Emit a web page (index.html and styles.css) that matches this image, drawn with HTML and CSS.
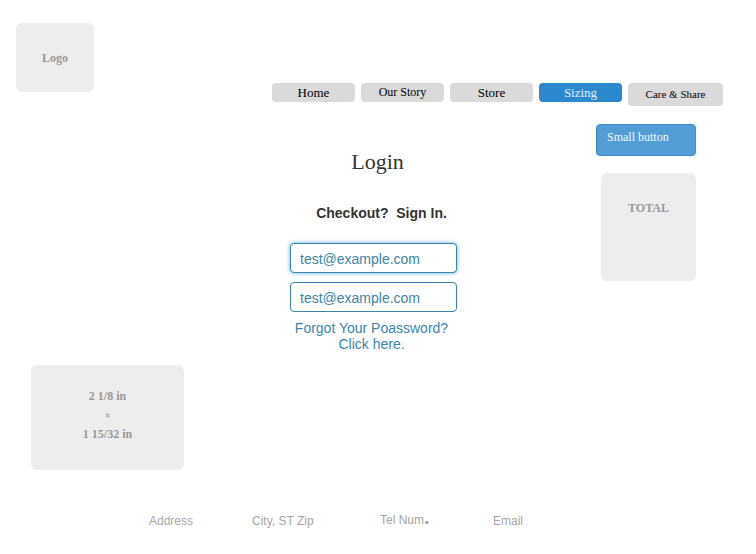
FILE: index.html
```html
<!DOCTYPE html>
<html lang="en">
<head>
<meta charset="utf-8">
<meta name="viewport" content="width=device-width, initial-scale=1">
<title>Login</title>
<link rel="stylesheet" href="styles.css">
</head>
<body>
<header class="header">
  <div class="box logo">Logo</div>
  <nav class="nav">
    <a class="tab" href="#">Home</a>
    <a class="tab tab-medium" href="#">Our Story</a>
    <a class="tab" href="#">Store</a>
    <a class="tab tab-active" href="#">Sizing</a>
    <a class="tab tab-wide" href="#">Care &amp; Share</a>
  </nav>
</header>
<main class="main">
  <div class="box size-box">
    <span>2 1/8 in</span>
    <span class="times">×</span>
    <span>1 15/32 in</span>
  </div>
  <form class="login">
    <h1 class="title">Login</h1>
    <h2 class="subtitle">Checkout?&nbsp; Sign In.</h2>
    <input class="field field-focus" type="email" value="test@example.com" aria-label="Email">
    <input class="field" type="email" value="test@example.com" aria-label="Confirm email">
    <a class="forgot" href="#">Forgot Your Poassword?<br>Click here.</a>
  </form>
  <aside class="side">
    <button class="small-button" type="button">Small button</button>
    <div class="box total">TOTAL</div>
  </aside>
</main>
<footer class="footer">
  <span>Address</span>
  <span>City, ST Zip</span>
  <span>Tel Num<b class="dot">.</b></span>
  <span>Email</span>
</footer>
</body>
</html>
```
FILE: styles.css
```css
* {
  box-sizing: border-box;
}

body {
  margin: 0;
  background: #fff;
  color: #333;
  font-family: "Liberation Sans", Arial, sans-serif;
}

.header {
  display: flex;
  justify-content: space-between;
  align-items: flex-start;
  padding: 23px 33px 0 16px;
}

.box {
  border-radius: 6px;
  background: #ededed;
  color: #999;
  font: bold 12px/19px "Liberation Serif", "Times New Roman", serif;
  text-align: center;
}

.logo {
  width: 78px;
  padding: 26px 0 24px;
}

.nav {
  display: flex;
  align-items: flex-start;
  gap: 6px;
  padding-top: 60px;
}

.tab {
  width: 83px;
  border-radius: 4px;
  background: #dadada;
  color: #000;
  font: 13px/19px "Liberation Serif", "Times New Roman", serif;
  text-align: center;
  text-decoration: none;
}

.tab-medium {
  font-size: 12px;
}

.tab-active {
  background: #2b88cd;
  color: #e4f1fb;
}

.tab-wide {
  width: 95px;
  font-size: 11px;
  line-height: 23px;
}

.main {
  display: grid;
  grid-template-columns: 153px 1fr 100px;
  padding: 18px 60px 0 31px;
}

.size-box {
  display: flex;
  flex-direction: column;
  align-self: end;
  padding: 22px 0 26px;
}

.times {
  font-size: 10px;
}

.login {
  display: flex;
  flex-direction: column;
  align-items: center;
  padding: 24px 33px 118px 0;
}

.title {
  margin: 0 0 27px;
  padding-left: 8px;
  font: 22px/28px "Liberation Serif", "Times New Roman", serif;
}

.subtitle {
  margin: 0 0 20px;
  padding-left: 16px;
  font-size: 14px;
  line-height: 20px;
}

.field {
  width: 167px;
  height: 30px;
  margin: 0 0 9px;
  padding: 1px 9px 0;
  border: 1px solid #3b85a8;
  border-radius: 4px;
  outline: 0;
  background: #fff;
  color: #3b85a8;
  font: 14px/20px "Liberation Sans", Arial, sans-serif;
}

.field-focus {
  box-shadow: 0 0 4px #5cace0;
}

.forgot {
  margin-top: -1px;
  padding-right: 4px;
  color: #3b85a8;
  font-size: 14px;
  line-height: 16px;
  text-align: center;
  text-decoration: none;
}

.side {
  display: flex;
  flex-direction: column;
  align-items: flex-end;
  gap: 17px;
}

.small-button {
  width: 100px;
  height: 32px;
  padding: 0 10px 6px;
  border: 1px solid #3f8cc8;
  border-radius: 4px;
  background: #519dd5;
  color: #f2f9ff;
  font: 12px/16px "Liberation Serif", "Times New Roman", serif;
  text-align: left;
}

.total {
  width: 95px;
  height: 108px;
  padding-top: 26px;
}

.footer {
  display: grid;
  grid-template-columns: 103px 128px 113px auto;
  align-items: end;
  padding: 33px 0 20px 149px;
  color: #a5a5a5;
  font-size: 12px;
  line-height: 20px;
}

.dot {
  font-size: 20px;
  line-height: 28px;
}
```
